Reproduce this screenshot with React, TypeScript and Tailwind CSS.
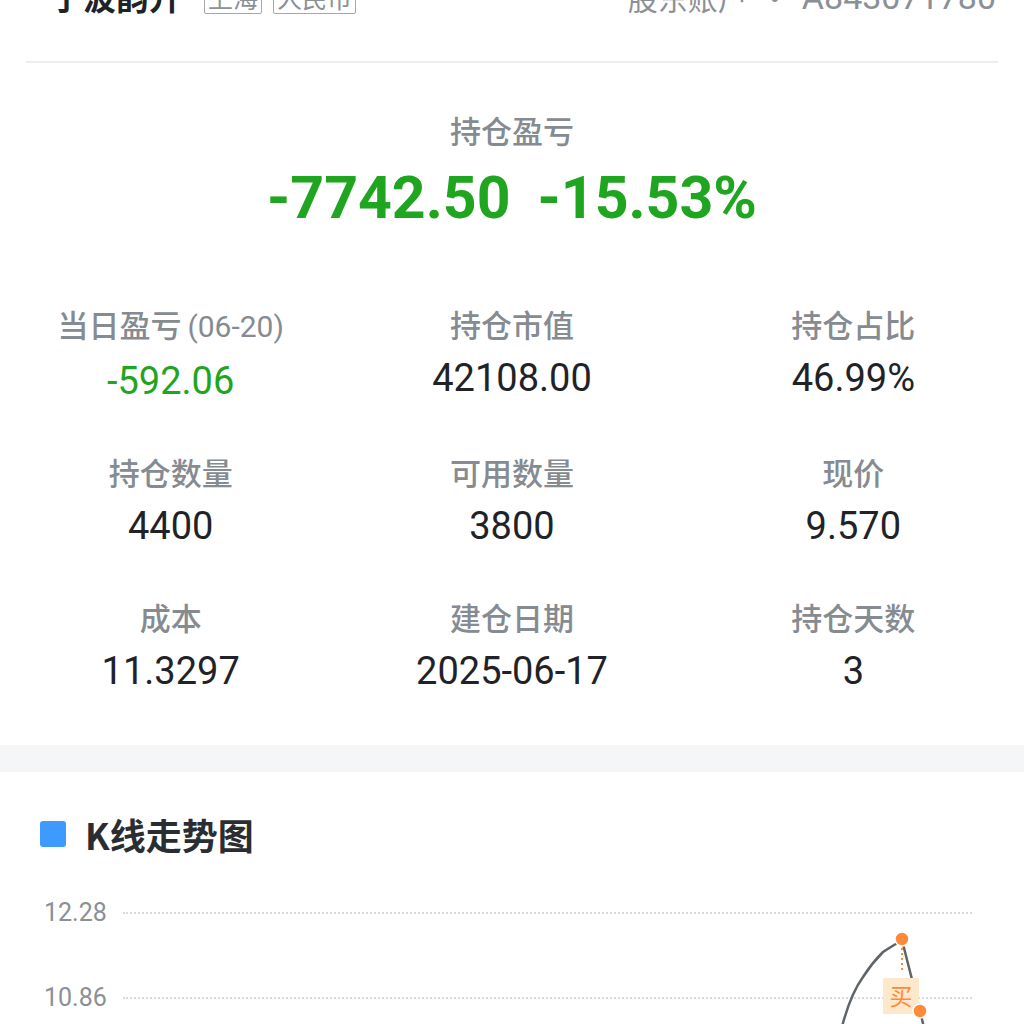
import React from "react";

const cjk = { fontFamily: '"Noto Sans CJK SC", "Noto Sans", sans-serif' };
const num = { fontFamily: 'Roboto, "Noto Sans CJK SC", sans-serif' };

const stats = [
  { label: "当日盈亏", extra: "(06-20)", value: "-592.06", green: true },
  { label: "持仓市值", value: "42108.00" },
  { label: "持仓占比", value: "46.99%" },
  { label: "持仓数量", value: "4400" },
  { label: "可用数量", value: "3800" },
  { label: "现价", value: "9.570" },
  { label: "成本", value: "11.3297" },
  { label: "建仓日期", value: "2025-06-17" },
  { label: "持仓天数", value: "3" },
];

function Chart() {
  return (
    <div className="relative">
      {["12.28", "10.86"].map((v) => (
        <div key={v} className="flex h-[85px] items-center pl-[44px] pr-[52px]">
          <span className="w-[79px] text-[25px] text-[#8a9096]" style={num}>
            {v}
          </span>
          <div className="flex-1 border-t-2 border-dotted border-[#d8dadd]" />
        </div>
      ))}
      <svg className="absolute inset-0" width="1024" height="170" viewBox="0 0 1024 170">
        {/* price line, y offset = page y - 870 */}
        <path
          d="M838 170 L843 153 C848 135 855 118 863 107 C870 96 877 88 883 82 L894 75 L900 72"
          fill="none"
          stroke="#5f6469"
          strokeWidth="2.5"
          strokeLinecap="round"
        />
        <path d="M903 74 L920 141 L927 170" fill="none" stroke="#5f6469" strokeWidth="2.5" strokeLinecap="round" />
        <line x1="902" y1="78" x2="902" y2="103" stroke="#ff8a3a" strokeWidth="2" strokeDasharray="2 3" />
        <rect x="883" y="108" width="36" height="36" fill="#fde8cc" />
        <text x="901" y="135" textAnchor="middle" fontSize="23" fill="#ff8a3a" style={cjk}>
          买
        </text>
        <circle cx="902" cy="69" r="7" fill="#ff8a3a" stroke="#fff" strokeWidth="1.5" />
        <circle cx="920" cy="141" r="7" fill="#ff8a3a" stroke="#fff" strokeWidth="1.5" />
      </svg>
    </div>
  );
}

export default function App() {
  return (
    <div className="h-[1024px] w-[1024px] overflow-hidden bg-white" style={cjk}>
      {/* Header */}
      <div className="-mt-[33px] flex h-[60px] items-center justify-between pl-[50px] pr-[28px]">
        <div className="flex items-center">
          <span className="text-[33px] font-bold text-[#1f2328]">宁波韵升</span>
          <span className="ml-[22px] rounded-[2px] border-[1.5px] border-[#a3a8ad] px-[3px] text-[25px] leading-[32px] text-[#8a9096]">
            上海
          </span>
          <span className="ml-[11px] rounded-[2px] border-[1.5px] border-[#a3a8ad] px-[3px] text-[25px] leading-[32px] text-[#8a9096]">
            人民币
          </span>
        </div>
        <div className="flex items-center text-[30px] text-[#8a9096]">
          股东账户
          <span className="mx-[12px]">·</span>
          <span style={num} className="text-[34px]">A843071780</span>
        </div>
      </div>
      <div className="mx-[26px] mt-[34px] h-[2px] bg-[#eceef0]" />

      {/* Hero */}
      <div className="mt-[47px] flex flex-col items-center">
        <div className="text-[31px] font-medium leading-[40px] text-[#858b91]">持仓盈亏</div>
        <div className="mt-[13px] flex text-[59px] font-bold leading-[70px] text-[#1fa51f]" style={num}>
          <span>-7742.50</span>
          <span className="ml-[27px]">-15.53%</span>
        </div>
      </div>

      {/* Stats */}
      <div className="mt-[71px] grid grid-cols-3 gap-y-[49px]">
        {stats.map((s) => (
          <div key={s.label} className="flex flex-col items-center">
            <div className="text-[31px] font-medium leading-[40px] text-[#858b91]">
              {s.label}
              {s.extra && (
                <span className="ml-[6px] text-[30px] font-normal" style={num}>
                  {s.extra}
                </span>
              )}
            </div>
            <div
              className={`mt-[12px] text-[38px] leading-[44px] ${s.green ? "text-[#1fa51f]" : "text-[#1f2328]"}`}
              style={num}
            >
              {s.value}
            </div>
          </div>
        ))}
      </div>

      <div className="mt-[52px] h-[27px] bg-[#f5f6f8]" />

      {/* K line */}
      <div className="mt-[38px] flex h-[48px] items-center pl-[40px]">
        <div className="h-[26px] w-[26px] rounded-[3px] bg-[#3d9bff]" />
        <span className="ml-[19px] text-[36px] font-semibold text-[#2a2e33]">K线走势图</span>
      </div>
      <div className="mt-[12px]">
        <Chart />
      </div>
    </div>
  );
}
